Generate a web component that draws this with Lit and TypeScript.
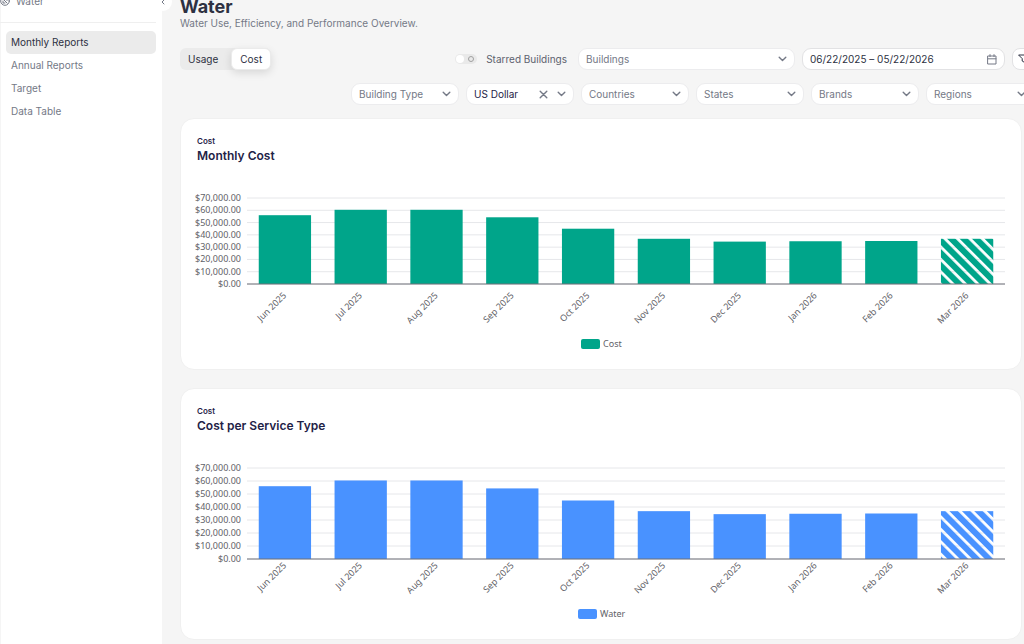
import {LitElement, html, svg, css} from 'lit';
import {customElement, property} from 'lit/decorators.js';

interface Reading {
  month: string;
  value: number;
  estimated?: boolean;
}

interface Filter {
  label: string;
  value?: string;
}

const READINGS: Reading[] = [
  { month: 'Jun 2025', value: 56000 },
  { month: 'Jul 2025', value: 60400 },
  { month: 'Aug 2025', value: 60400 },
  { month: 'Sep 2025', value: 54300 },
  { month: 'Oct 2025', value: 45000 },
  { month: 'Nov 2025', value: 36800 },
  { month: 'Dec 2025', value: 34500 },
  { month: 'Jan 2026', value: 34800 },
  { month: 'Feb 2026', value: 35000 },
  { month: 'Mar 2026', value: 36800, estimated: true },
];

const FILTERS: Filter[] = [
  { label: 'Building Type' },
  { label: 'Currency', value: 'US Dollar' },
  { label: 'Countries' },
  { label: 'States' },
  { label: 'Brands' },
  { label: 'Regions' },
];

@customElement('water-select')
export class WaterSelect extends LitElement {
  @property() label = '';
  @property() value = '';

  static styles = css`
    :host {
      display: flex;
    }

    .select {
      display: flex;
      flex: 1;
      align-items: center;
      gap: 9px;
      min-width: 0;
      height: 22px;
      box-sizing: border-box;
      padding: 0 7px;
      border: 1px solid #ececee;
      border-radius: 9px;
      background: #fff;
    }

    .select__field {
      flex: 1;
      min-width: 0;
      padding: 0;
      border: 0;
      appearance: none;
      background: none;
      color: #747986;
      font: 10px 'Inter', sans-serif;
    }

    .select__field.chosen {
      color: #1f2347;
    }

    .select__clear {
      display: flex;
      padding: 0;
      border: 0;
      background: none;
    }

    .icon {
      flex: none;
      fill: none;
      stroke: #747986;
      stroke-width: 1.4;
      stroke-linecap: round;
      stroke-linejoin: round;
    }
  `;

  render() {
    return html`
      <div class="select">
        <select class="select__field ${this.value ? 'chosen' : ''}" aria-label=${this.label}>
          <option>${this.value || this.label}</option>
        </select>
        ${this.value
          ? html`
              <button class="select__clear" aria-label="Clear" @click=${() => (this.value = '')}>
                <svg class="icon" width="9" height="9" viewBox="0 0 9 9"><path d="M1.2 1.2l6.6 6.6M7.8 1.2L1.2 7.8" /></svg>
              </button>
            `
          : ''}
        <svg class="icon" width="9" height="6" viewBox="0 0 9 6"><path d="M1.2 1.2l3.3 3.3 3.3-3.3" /></svg>
      </div>
    `;
  }
}

@customElement('water-chart')
export class WaterChart extends LitElement {
  @property() heading = '';
  @property() series = '';
  @property() color = '';
  @property({ type: Number }) base = 0;
  @property({ type: Array }) readings: Reading[] = [];

  static styles = css`
    :host {
      display: block;
    }

    .card {
      padding: 16px;
      border: 1px solid #f0f0f0;
      border-radius: 14px;
      background: #fff;
      color: #1f2347;
      font-family: 'Inter', sans-serif;
    }

    .card__kicker {
      margin: 0;
      font-size: 8px;
      font-weight: 600;
      line-height: 13px;
    }

    .card__heading {
      margin: 0;
      font-size: 12px;
      font-weight: 600;
      line-height: 16px;
    }

    .chart {
      display: block;
      width: 100%;
      margin-top: 23px;
      overflow: visible;
    }

    .chart__label {
      fill: #5f6268;
      font: 9px 'Noto Sans', sans-serif;
    }

    .chart__grid {
      stroke: #e6e7ea;
    }

    .chart__axis {
      stroke: #6e7079;
    }
  `;

  render() {
    const top = 11;
    const left = 50;
    const right = 808;
    const step = (this.base - top) / 7;
    const band = (right - left) / this.readings.length;
    const barWidth = band * 0.69;

    return html`
      <section class="card">
        <p class="card__kicker">Cost</p>
        <h2 class="card__heading">${this.heading}</h2>
        <svg class="chart" viewBox="0 0 808 166" role="img" aria-label=${this.heading}>
          <defs>
            <pattern id="hatch" x="1" width="8.8" height="8.8" patternUnits="userSpaceOnUse" patternTransform="rotate(-45)">
              <rect width="6" height="8.8" fill=${this.color} />
            </pattern>
          </defs>
          ${[0, 1, 2, 3, 4, 5, 6, 7].map((i) => {
            const y = this.base - i * step;
            return svg`
              <line class="chart__grid" x1=${left} x2=${right} y1=${y} y2=${y} />
              <text class="chart__label" x="44" y=${y + 3} text-anchor="end">
                $${(i * 10000).toLocaleString('en-US', { minimumFractionDigits: 2 })}
              </text>
            `;
          })}
          ${this.readings.map((reading, i) => {
            const center = left + band * (i + 0.5);
            const height = (reading.value / 10000) * step;
            return svg`
              <rect
                x=${center - barWidth / 2}
                y=${this.base - height}
                width=${barWidth}
                height=${height}
                fill=${reading.estimated ? 'url(#hatch)' : this.color}
              />
              <text
                class="chart__label"
                text-anchor="end"
                transform="translate(${center + 2} 109) rotate(-45)"
              >${reading.month}</text>
            `;
          })}
          <line class="chart__axis" x1=${left} x2=${right} y1=${this.base} y2=${this.base} />
          <rect x=${this.series === 'Cost' ? 384 : 381} y="152" width="19" height="10" rx="2" fill=${this.color} />
          <text class="chart__label" x=${this.series === 'Cost' ? 406 : 403} y="160">${this.series}</text>
        </svg>
      </section>
    `;
  }
}

@customElement('app-root')
export class AppRoot extends LitElement {
  static styles = css`
    :host {
      display: flex;
      height: 100vh;
      overflow: hidden;
      background: #f5f5f5;
      color: #2d3142;
      font: 10px 'Inter', sans-serif;
    }

    button {
      font: inherit;
      color: inherit;
    }

    .sidebar {
      position: relative;
      flex: none;
      width: 162px;
      box-sizing: border-box;
      padding: 0 6px 0 5px;
      border-left: 1px solid #f5f5f5;
      background: #fff;
    }

    .sidebar__section {
      display: flex;
      align-items: center;
      gap: 6px;
      height: 35px;
      box-sizing: border-box;
      margin: -12px 0 8px -6px;
      padding-bottom: 8px;
      border-bottom: 1px solid #efefef;
      color: #747986;
    }

    .sidebar__collapse {
      position: absolute;
      top: -7px;
      right: -10px;
      display: flex;
      align-items: center;
      justify-content: center;
      width: 18px;
      height: 18px;
      padding: 0;
      border: 0;
      border-radius: 9px;
      background: #fff;
    }

    .nav {
      display: flex;
      flex-direction: column;
    }

    .nav__link {
      padding: 0 5px;
      border-radius: 5px;
      color: #747986;
      line-height: 23px;
      text-decoration: none;
    }

    .nav__link.active {
      background: #ebebeb;
      color: #2d3142;
    }

    .main {
      flex: 1;
      min-width: 0;
      padding: 0 2px 0 18px;
    }

    .title {
      margin: 0;
      font-size: 18px;
      font-weight: 700;
      line-height: 14px;
    }

    .subtitle {
      margin: 0 0 16px;
      color: #747986;
      line-height: 18px;
    }

    /* The toolbar runs past the cards into the right gutter. */
    .toolbar {
      display: grid;
      gap: 13px;
      margin: 0 -12px 13px 0;
    }

    .toolbar__row {
      display: flex;
      align-items: center;
      justify-content: flex-end;
      gap: 7px;
    }

    .tabs {
      display: flex;
      margin-right: auto;
      border-radius: 6px;
      background: #ebebeb;
    }

    .tabs__tab {
      height: 22px;
      padding: 0 8px;
      border: 0;
      border-radius: 6px;
      background: none;
    }

    .tabs__tab:first-child {
      padding-right: 13px;
    }

    .tabs__tab.active {
      border: 1px solid #ebebeb;
      background: #fff;
      box-shadow: 0 3px 8px rgba(0, 0, 0, 0.12);
    }

    .starred {
      display: flex;
      align-items: center;
      gap: 9px;
      margin-right: 4px;
      color: #5d616e;
    }

    .starred__switch {
      display: flex;
      align-items: center;
      justify-content: space-between;
      width: 22px;
      height: 10px;
      margin: 0;
      box-sizing: border-box;
      padding: 0 3px 0 1px;
      border-radius: 5px;
      appearance: none;
      background: #e9e9e9;
    }

    .starred__switch::before {
      width: 8px;
      height: 8px;
      border-radius: 4px;
      background: #fff;
      content: '';
    }

    .starred__switch::after {
      width: 4px;
      height: 4px;
      border: 1px solid #a0a0a0;
      border-radius: 3px;
      content: '';
    }

    .buildings {
      width: 217px;
    }

    .filter {
      width: 108px;
    }

    .dates {
      display: flex;
      align-items: center;
      width: 203px;
      height: 22px;
      box-sizing: border-box;
      padding: 0 7px;
      border: 1px solid #e2e2e4;
      border-radius: 9px;
      background: #fff;
    }

    .dates__field {
      flex: 1;
      min-width: 0;
      padding: 0;
      border: 0;
      background: none;
      color: #2d3142;
      font: inherit;
    }

    .more {
      display: flex;
      align-items: center;
      width: 22px;
      height: 22px;
      box-sizing: border-box;
      padding: 0 5px;
      border: 1px solid #e2e2e4;
      border-radius: 8px;
      background: #fff;
    }

    .cards {
      display: grid;
      gap: 18px;
    }

    .icon {
      flex: none;
      fill: none;
      stroke: #747986;
      stroke-linecap: round;
      stroke-linejoin: round;
    }

    .icon.dark {
      stroke: #2d3142;
    }
  `;

  render() {
    return html`
      <aside class="sidebar">
        <div class="sidebar__section">
          <svg class="icon" width="10" height="10" viewBox="0 0 10 10">
            <circle cx="5" cy="5" r="4.3" />
            <path d="M3 3l4 4M3 5v2h2M5.5 3H7v1.5" />
          </svg>
          Water
        </div>
        <nav class="nav">
          <a class="nav__link active" href="#monthly">Monthly Reports</a>
          <a class="nav__link" href="#annual">Annual Reports</a>
          <a class="nav__link" href="#target">Target</a>
          <a class="nav__link" href="#data">Data Table</a>
        </nav>
        <button class="sidebar__collapse" aria-label="Collapse menu">
          <svg class="icon" width="4" height="6" viewBox="0 0 4 6"><path d="M3 1L1 3l2 2" /></svg>
        </button>
      </aside>
      <main class="main">
        <h1 class="title">Water</h1>
        <p class="subtitle">Water Use, Efficiency, and Performance Overview.</p>
        <div class="toolbar">
          <div class="toolbar__row">
            <div class="tabs">
              <button class="tabs__tab">Usage</button>
              <button class="tabs__tab active">Cost</button>
            </div>
            <label class="starred">
              <input class="starred__switch" type="checkbox" role="switch" />
              Starred Buildings
            </label>
            <water-select class="buildings" label="Buildings"></water-select>
            <div class="dates">
              <input class="dates__field" aria-label="Date range" value="06/22/2025 – 05/22/2026" />
              <svg class="icon" width="10" height="11" viewBox="0 0 10 11">
                <path d="M1 2h8v8H1zM1 4.8h8M3 .6v2M7 .6v2" />
              </svg>
            </div>
            <button class="more" aria-label="More filters">
              <svg class="icon dark" width="11" height="10" viewBox="0 0 11 10">
                <path d="M1 1h9L6.8 5v3.6L4.2 7V5z" />
              </svg>
            </button>
          </div>
          <div class="toolbar__row">
            ${FILTERS.map(
              (filter) => html`
                <water-select class="filter" label=${filter.label} value=${filter.value ?? ''}></water-select>
              `
            )}
          </div>
        </div>
        <div class="cards">
          <water-chart heading="Monthly Cost" series="Cost" color="#00a58a" base="97" .readings=${READINGS}></water-chart>
          <water-chart heading="Cost per Service Type" series="Water" color="#4992ff" base="102" .readings=${READINGS}></water-chart>
        </div>
      </main>
    `;
  }
}
